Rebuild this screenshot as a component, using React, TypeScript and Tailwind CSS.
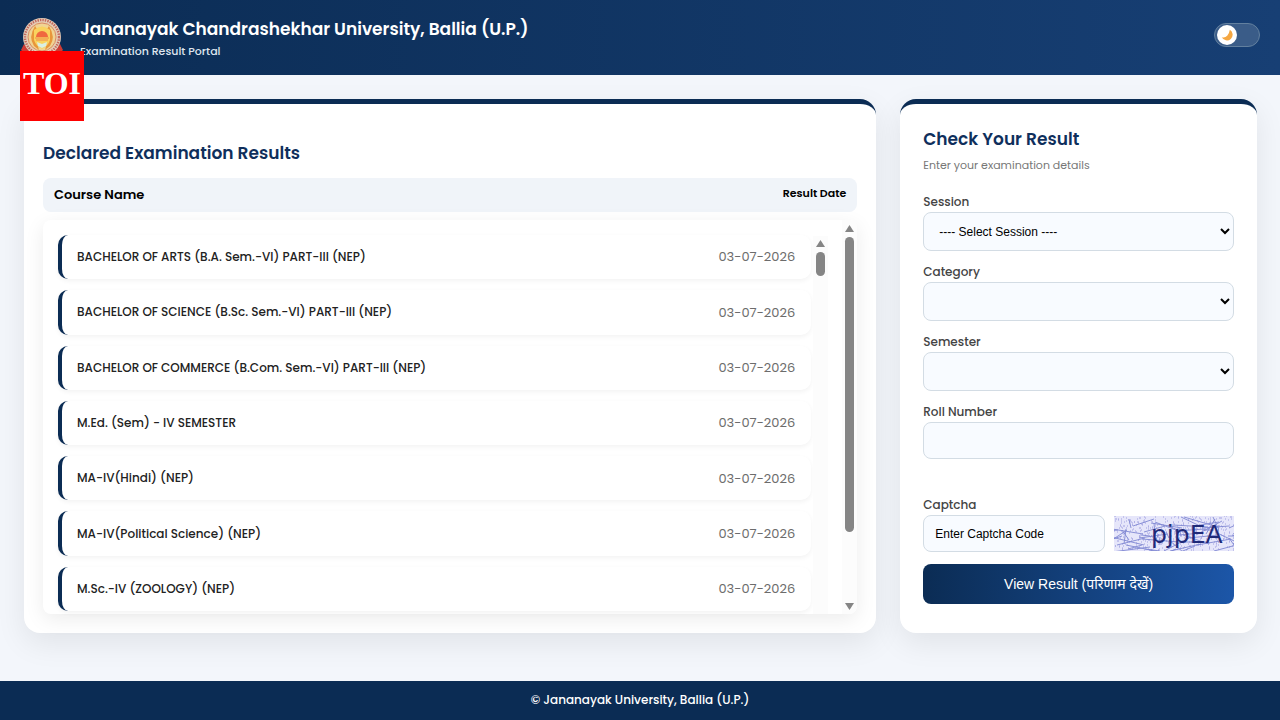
import type React from "react";
import { useState } from "react";

type Result = {
  course: string;
  date: string;
};

const results: Result[] = [
  { course: "BACHELOR OF ARTS (B.A. Sem.-VI) PART-III (NEP)", date: "03-07-2026" },
  { course: "BACHELOR OF SCIENCE (B.Sc. Sem.-VI) PART-III (NEP)", date: "03-07-2026" },
  { course: "BACHELOR OF COMMERCE (B.Com. Sem.-VI) PART-III (NEP)", date: "03-07-2026" },
  { course: "M.Ed. (Sem) - IV SEMESTER", date: "03-07-2026" },
  { course: "MA-IV(Hindi) (NEP)", date: "03-07-2026" },
  { course: "MA-IV(Political Science) (NEP)", date: "03-07-2026" },
  { course: "M.Sc.-IV (ZOOLOGY) (NEP)", date: "03-07-2026" },
];

const Emblem: React.FC = () => (
  <svg viewBox="0 0 44 44" className="h-11 w-11 shrink-0" aria-hidden="true">
    <path d="M4 27 L1 33 L3 35 L1 38 L10 39 L22 43 L34 39 L43 38 L41 35 L43 33 L40 27 L34 33 L10 33 Z" fill="#cf3b34" />
    <circle cx="22" cy="20" r="19" fill="#e3cdb8" />
    <circle cx="22" cy="20" r="17" fill="none" stroke="#c4685c" strokeWidth="2.4" strokeDasharray="1.4 1.1" />
    <circle cx="22" cy="20" r="14.600" fill="#f0d493" />
    <circle cx="22" cy="20" r="14" fill="none" stroke="#d98a6a" strokeWidth="1" />
    <path d="M15 9 Q8 20 14 29 L19 33 L17 26 Q13 19 17 12 Z" fill="#e8963a" />
    <path d="M29 9 Q36 20 30 29 L25 33 L27 26 Q31 19 27 12 Z" fill="#e8963a" />
    <path d="M14 13 Q22 6 30 13 L30 23 Q28 29 22 32 Q16 29 14 23 Z" fill="#f9d35e" />
    <path d="M16 20 A6 6 0 0 1 28 20 Z" fill="#f0683f" />
    <path d="M15 21h14M16 23h12" stroke="#ee8a4c" strokeWidth="1" />
    <path d="M17 25 L22 27 L27 25 L26 29 L22 31 L18 29 Z" fill="#d9efe4" />
  </svg>
);

const Moon: React.FC = () => (
  <svg viewBox="0 0 12 12" className="h-3 w-3" aria-hidden="true">
    <path d="M8.800 0.800 A5.700 5.700 0 1 1 0.800 8.200 Q4 9 6.200 6.800 Q8.400 4.400 8.800 0.800 Z" fill="#f5a742" />
  </svg>
);

// Small generator so the scribble stays the same on every render
const scribble = (() => {
  let seed = 11;
  const next = (max: number) => {
    seed = (seed * 16807) % 2147483647;
    return Math.round((seed / 2147483647) * max);
  };
  const lines = Array.from({ length: 62 }, () => {
    const x = next(130) - 10;
    const y = next(36);
    return `M${x} ${y}L${x + next(76) - 38} ${y + next(30) - 15}`;
  }).join("");
  const dots = Array.from({ length: 420 }, () => `M${next(120)} ${next(35)}h1`).join("");
  return { lines, dots };
})();

const CaptchaImage: React.FC = () => (
  <svg viewBox="0 0 120 35" className="h-[35px] w-[120px] shrink-0" role="img" aria-label="Captcha">
    <rect width="120" height="35" fill="#e6e6fa" />
    <path d={scribble.dots} stroke="#a0a0e0" strokeWidth="1" />
    <path d={scribble.lines} stroke="#8088d2" strokeWidth="0.9" fill="none" />
    <text x="37" y="27" fill="#1f2a78" fontSize="25" fontFamily="'DejaVu Sans', sans-serif">
      pjpEA
    </text>
  </svg>
);

const Arrow: React.FC<{ down?: boolean }> = ({ down }) => (
  <svg viewBox="0 0 9 7" className="h-[7px] w-[9px] shrink-0">
    <path d={down ? "M0 0h9L4.500 7z" : "M4.500 0L9 7H0z"} fill="#858585" />
  </svg>
);

const labelClass = "block text-xs leading-5 font-medium text-[#444]";

const controlClass =
  "block w-full rounded-lg border border-[#d3dce4] bg-[#f8fbff] px-[11px] font-['Liberation_Sans',Arial,sans-serif] text-xs text-black";

const SelectField: React.FC<{ id: string; label: string; option?: string }> = ({
  id,
  label,
  option,
}) => (
  <div className="mb-[11px]">
    <label htmlFor={id} className={labelClass}>
      {label}
    </label>
    <select id={id} className={`${controlClass} h-[39px]`}>
      {option && <option>{option}</option>}
    </select>
  </div>
);

const App: React.FC = () => {
  const [dark, setDark] = useState(false);

  return (
    <div className="relative flex min-h-screen flex-col bg-[#f3f6fb] font-[Poppins,Inter,'Noto_Sans',sans-serif]">
      <header className="flex h-[75px] items-start bg-linear-to-r from-[#0b2c54] to-[#173f74] px-5 pt-[17px] text-white">
        <Emblem />
        <div className="ml-4">
          <h1 className="text-[17px] leading-6 font-semibold">
            Jananayak Chandrashekhar University, Ballia (U.P.)
          </h1>
          <p className="text-[11px] leading-5 font-medium text-[#dfe6ef]">
            Examination Result Portal
          </p>
        </div>
        <button
          type="button"
          role="switch"
          aria-checked={dark}
          aria-label="Dark mode"
          onClick={() => setDark(!dark)}
          className={`mt-1.5 ml-auto flex h-6 w-[46px] items-center rounded-full border border-[#62809f] bg-[#3a5c88] px-[2px] ${dark ? "justify-end" : ""}`}
        >
          <span className="flex h-5 w-5 items-center justify-center rounded-full bg-white">
            <Moon />
          </span>
        </button>
      </header>

      <div className="absolute top-[51px] left-5 z-10 flex h-[70px] w-16 justify-center bg-[#fe0000] pt-3 font-['Liberation_Serif',serif] text-[32px] leading-10 font-bold text-white">
        TOI
      </div>

      <main className="grid flex-1 grid-cols-[43fr_18fr] items-start gap-6 pt-6 pr-[23px] pb-12 pl-6">
        <section className="rounded-2xl border-t-[5px] border-[#0b2c54] bg-white px-[19px] pt-[37px] pb-[19px] shadow-[0_10px_30px_rgba(0,0,0,0.08)]">
          <h2 className="text-[17px] leading-6 font-semibold text-[#0f2f5c]">
            Declared Examination Results
          </h2>
          <div className="relative mt-[13px]">
            <table className="block w-full">
              <thead className="block">
                <tr className="flex h-[34px] justify-between rounded-lg bg-[#f0f4f9] px-[11px] text-black">
                  <th scope="col" className="text-[13px] leading-[34px] font-semibold">
                    Course Name
                  </th>
                  <th scope="col" className="text-[11px] leading-[30px] font-semibold">
                    Result Date
                  </th>
                </tr>
              </thead>
              <tbody className="mt-2 flex h-[394px] flex-col gap-[11px] rounded-lg pt-[15px] pr-[46px] pb-[3px] pl-[15px] shadow-[0_5px_20px_rgba(0,0,0,0.08)]">
                {results.map((r) => (
                  <tr
                    key={r.course}
                    className="flex flex-1 items-center justify-between rounded-[10px] border-l-4 border-[#0b2c54] bg-white pr-4 pl-[15px] shadow-[0_2px_5px_rgba(0,0,0,0.05)]"
                  >
                    <td className="text-xs font-medium text-[#222]">{r.course}</td>
                    <td className="text-[13px] text-[#6c6c6c]">{r.date}</td>
                  </tr>
                ))}
              </tbody>
            </table>

            {/* Scroll tracks */}
            <div
              className="absolute top-[58px] right-[29px] bottom-0 flex w-[15px] flex-col items-center gap-[5px] bg-[#fcfcfc] pt-1"
              aria-hidden="true"
            >
              <Arrow />
              <div className="h-6 w-[9px] rounded-full bg-[#858585]" />
            </div>
            <div
              className="absolute top-[42px] right-0 bottom-0 flex w-[15px] flex-col items-center gap-[5px] rounded-r-lg bg-[#fcfcfc] pt-[5px] pb-1"
              aria-hidden="true"
            >
              <Arrow />
              <div className="h-[295px] w-[9px] rounded-full bg-[#858585]" />
              <div className="mt-auto flex">
                <Arrow down />
              </div>
            </div>
          </div>
        </section>

        <section className="self-stretch rounded-2xl border-t-[5px] border-[#0b2c54] bg-white px-[23px] pt-[23px] pb-7 shadow-[0_10px_30px_rgba(0,0,0,0.08)]">
          <h2 className="text-[17px] leading-6 font-semibold text-[#0f2f5c]">Check Your Result</h2>
          <p className="mt-1 mb-[17px] text-[11px] leading-5 text-[#777]">
            Enter your examination details
          </p>
          <form onSubmit={(e) => e.preventDefault()}>
            <SelectField id="session" label="Session" option="---- Select Session ----" />
            <SelectField id="category" label="Category" />
            <SelectField id="semester" label="Semester" />
            <label htmlFor="roll" className={labelClass}>
              Roll Number
            </label>
            <input id="roll" type="text" className={`${controlClass} h-[37px]`} />
            <label htmlFor="captcha" className={`${labelClass} mt-9`}>
              Captcha
            </label>
            <div className="flex items-center gap-[9px]">
              <input
                id="captcha"
                type="text"
                placeholder="Enter Captcha Code"
                className={`${controlClass} h-[37px] min-w-0 flex-1 placeholder:text-black`}
              />
              <CaptchaImage />
            </div>
            <button
              type="submit"
              className="mt-3 h-10 w-full rounded-lg bg-linear-to-r from-[#0b2c54] to-[#1c56a8] font-['Liberation_Sans','Noto_Sans',sans-serif] text-sm text-white"
            >
              View Result (परिणाम देखें)
            </button>
          </form>
        </section>
      </main>

      <footer className="bg-[#0b2c54] pt-2 pb-[10px] text-center text-xs leading-[21px] font-medium text-white">
        © Jananayak University, Ballia (U.P.)
      </footer>
    </div>
  );
};

export default App;
